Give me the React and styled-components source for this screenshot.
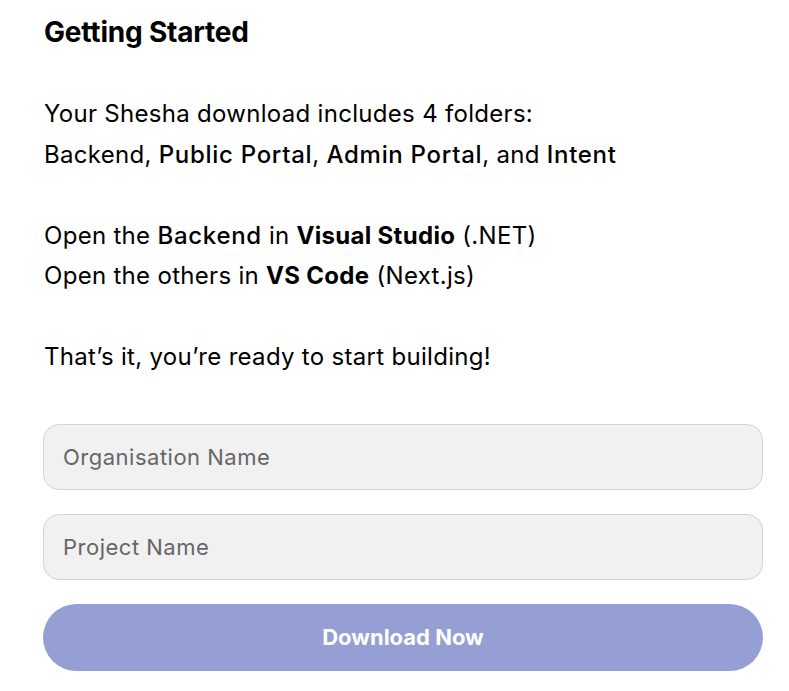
import React from 'react'
import styled, { createGlobalStyle } from 'styled-components'

const GlobalStyle = createGlobalStyle`
  html, body {
    margin: 0;
    padding: 0;
    background: #fff;
  }
  body {
    font-family: "Inter", "Open Sans", sans-serif;
    color: #000;
  }
`

const Page = styled.div`
  width: 720px;
  padding: 14px 0 0 43px;
`

const Title = styled.h2`
  margin: 0 0 0 1px;
  font-size: 28px;
  font-weight: 700;
  letter-spacing: -0.2px;
  line-height: 36px;
`

const Copy = styled.div`
  margin: 44px 0 0 1px;
  font-size: 24px;
  letter-spacing: 0.3px;
  line-height: 40.5px;
`

const Para = styled.p`
  margin: 0 0 40.5px;
  &:last-child {
    margin-bottom: 0;
  }
`

const Strong = styled.span`
  font-weight: ${({ $heavy }) => ($heavy ? 700 : 500)};
  letter-spacing: ${({ $heavy }) => ($heavy ? '0.3px' : '0.7px')};
`

const Form = styled.form`
  display: flex;
  flex-direction: column;
  gap: 24px;
  margin-top: 46px;
`

const Field = styled.input`
  box-sizing: border-box;
  width: 720px;
  height: 66px;
  padding: 0 19px;
  border: 1px solid #d4d4d4;
  border-radius: 16px;
  background: #f1f1f1;
  font-family: inherit;
  font-size: 22px;
  letter-spacing: 0.5px;
  color: #333;
  outline: none;

  &::placeholder {
    color: #666;
  }
`

const Button = styled.button`
  height: 67px;
  border: none;
  border-radius: 34px;
  background: #959fd4;
  color: #fff;
  font-family: inherit;
  font-size: 22px;
  font-weight: 700;
  cursor: pointer;
`

export default function App() {
  return (
    <>
      <GlobalStyle />
      <Page>
        <Title>Getting Started</Title>
        <Copy>
          <Para>
            Your Shesha download includes 4 folders:
            <br />
            Backend, <Strong>Public Portal</Strong>, <Strong>Admin Portal</Strong>, and{' '}
            <Strong>Intent</Strong>
          </Para>
          <Para>
            Open the <Strong>Backend</Strong> in <Strong $heavy>Visual Studio</Strong> (.NET)
            <br />
            Open the others in <Strong $heavy>VS Code</Strong> (Next.js)
          </Para>
          <Para>That’s it, you’re ready to start building!</Para>
        </Copy>
        <Form onSubmit={(e) => e.preventDefault()}>
          <Field placeholder="Organisation Name" />
          <Field placeholder="Project Name" />
          <Button type="submit">Download Now</Button>
        </Form>
      </Page>
    </>
  )
}
